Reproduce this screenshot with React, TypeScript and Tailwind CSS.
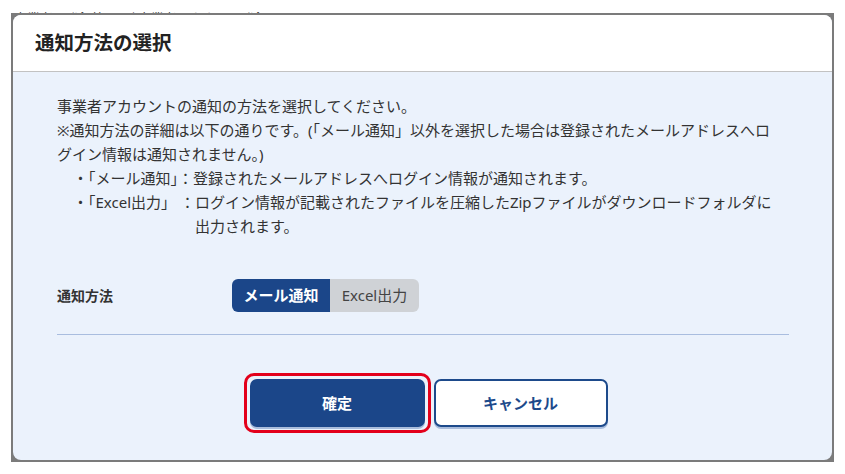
import { useState } from 'react'

type Method = 'mail' | 'excel'

export default function App() {
  const [method, setMethod] = useState<Method>('mail')

  return (
    <div className="relative h-[474px] w-[845px] overflow-hidden bg-white font-['Noto_Sans','Noto_Sans_CJK_JP',sans-serif] text-[#333]">
      {/* page behind the modal */}
      <div className="whitespace-nowrap pl-[14px] pt-[10px] text-[13px] leading-[16px] text-[#444]">
        事業者の登録管理 ／ 事業者アカウント登録
      </div>

      {/* modal */}
      <div className="absolute left-[11px] top-[13px] h-[449px] w-[823px] bg-[#7b7b7b] p-[2px]">
        <div className="flex h-full flex-col overflow-hidden rounded-lg bg-[#ebf2fc]">
          {/* Header */}
          <div className="flex h-[57px] shrink-0 items-center border-b border-[#c2c2c2] bg-white px-[22px]">
            <h2 className="text-[19.5px] font-bold text-[#222]">通知方法の選択</h2>
          </div>

          {/* Body */}
          <div className="flex flex-1 flex-col pl-[44px] pr-[43px] pt-[22px]">
            <div className="pr-[8px] text-[15px] leading-[24px] text-[#333]">
              <p>事業者アカウントの通知の方法を選択してください。</p>
              <p>
                ※通知方法の詳細は以下の通りです。(「メール通知」以外を選択した場合は登録されたメールアドレスへログイン情報は通知されません。)
              </p>
              <div className="pl-[16px]">
                <p>・「メール通知」：登録されたメールアドレスへログイン情報が通知されます。</p>
                <div className="flex">
                  <span className="shrink-0 whitespace-nowrap">・「Excel出力」 ：</span>
                  <span>
                    ログイン情報が記載されたファイルを圧縮したZipファイルがダウンロードフォルダに出力されます。
                  </span>
                </div>
              </div>
            </div>

            {/* Method row */}
            <div className="mt-[41px] flex items-center">
              <div className="w-[175px] text-[14px] font-bold text-[#333]">通知方法</div>
              <div className="flex h-[33px] overflow-hidden rounded-[6px]">
                <button
                  onClick={() => setMethod('mail')}
                  className={
                    method === 'mail'
                      ? 'w-[98px] bg-[#1b4689] text-[15px] font-bold text-white'
                      : 'w-[98px] bg-[#cfd2d6] text-[15px] text-[#444]'
                  }
                >
                  メール通知
                </button>
                <button
                  onClick={() => setMethod('excel')}
                  className={
                    method === 'excel'
                      ? 'w-[89px] bg-[#1b4689] text-[15px] font-bold text-white'
                      : 'w-[89px] bg-[#cfd2d6] text-[15px] text-[#444]'
                  }
                >
                  Excel出力
                </button>
              </div>
            </div>

            <div className="mt-[22px] border-t border-[#a9bddf]" />

            {/* Actions */}
            <div className="mt-[38px] flex items-center justify-center gap-[3px] pl-[5px]">
              <span className="rounded-[10px] border-[3px] border-[#e3001b] p-[3px]">
                <button className="block h-[48px] w-[175px] rounded-[7px] bg-[#1b4689] text-[15px] font-bold text-white shadow-[0_2px_0_#a9bcdc]">
                  確定
                </button>
              </span>
              <button className="h-[48px] w-[174px] rounded-[7px] border-2 border-[#1d4a8b] bg-white text-[15px] font-bold text-[#1d4a8b] shadow-[0_2px_0_#a9bcdc]">
                キャンセル
              </button>
            </div>
          </div>
        </div>
      </div>
    </div>
  )
}
